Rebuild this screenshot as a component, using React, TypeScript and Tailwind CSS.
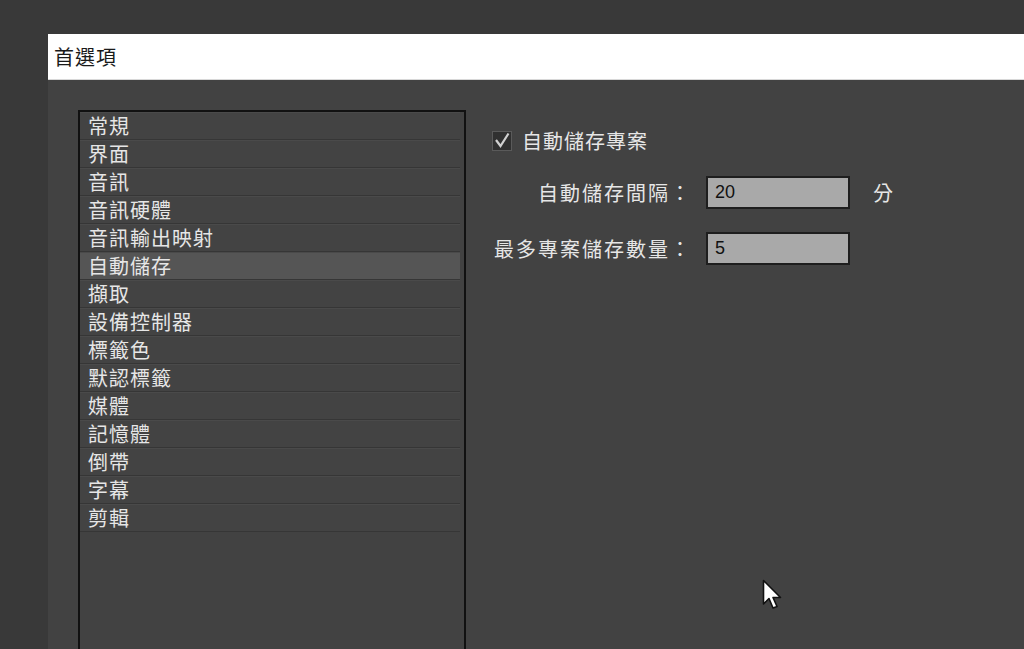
import { useState } from "react";

const items = [
  "常規",
  "界面",
  "音訊",
  "音訊硬體",
  "音訊輸出映射",
  "自動儲存",
  "擷取",
  "設備控制器",
  "標籤色",
  "默認標籤",
  "媒體",
  "記憶體",
  "倒帶",
  "字幕",
  "剪輯",
];

const font = {
  fontFamily: '"Noto Sans CJK TC", "Noto Sans", sans-serif',
};

export default function App() {
  const [selected, setSelected] = useState("自動儲存");
  const [autoSave, setAutoSave] = useState(true);
  const [interval, setIntervalValue] = useState("20");
  const [maxCount, setMaxCount] = useState("5");

  return (
    <div
      className="relative h-[649px] w-[1024px] overflow-hidden bg-[#393939] pl-[48px] pt-[34px]"
      style={font}
    >
      <div className="flex h-full flex-col bg-[#424242]">
        {/* title bar */}
        <div className="flex h-[46px] shrink-0 items-center border-b border-[#d8d8d8] bg-white pl-[6px]">
          <span className="text-[20px] leading-none tracking-[1px] text-[#1a1a1a]">首選項</span>
        </div>

        <div className="flex flex-1 pl-[30px] pt-[30px]">
          {/* category list */}
          <div className="h-[600px] w-[388px] shrink-0 border-2 border-[#111] bg-[#424242] pr-[4px]">
            {items.map((it) => (
              <div
                key={it}
                onClick={() => setSelected(it)}
                className={
                  "flex h-[28px] items-center border-b border-t border-b-[#363636] border-t-[#4a4a4a] pl-[8px] text-[20px] leading-none tracking-[1px] text-[#e6e6e6] " +
                  (selected === it ? "bg-[#555555]" : "bg-[#434343]")
                }
              >
                {it}
              </div>
            ))}
          </div>

          {/* settings */}
          <div className="flex flex-col pl-[26px] pt-[21px]">
            <label className="flex cursor-pointer items-center gap-[10px]">
              <span
                onClick={() => setAutoSave(!autoSave)}
                className="flex h-[20px] w-[20px] items-center justify-center border border-[#5a5a5a] bg-[#303030]"
              >
                {autoSave && (
                  <svg width="18" height="18" viewBox="0 0 18 18">
                    <path d="M3 8 L7.5 14 L15.5 1.5" fill="none" stroke="#d0d0d0" strokeWidth="2.2" />
                  </svg>
                )}
              </span>
              <span className="text-[20px] leading-none tracking-[1px] text-[#e6e6e6]">自動儲存專案</span>
            </label>

            <div className="mt-[25px] grid grid-cols-[200px_144px_auto] items-center gap-x-[14px] gap-y-[23px]">
              <span className="text-right text-[20px] leading-none tracking-[2px] text-[#e6e6e6]">自動儲存間隔：</span>
              <input
                value={interval}
                onChange={(e) => setIntervalValue(e.target.value)}
                className="h-[33px] w-[144px] border-2 border-[#1e1e1e] bg-[#a9a9a9] px-[7px] text-[18px] text-[#111] outline-none"
                style={{ fontFamily: '"Liberation Sans", Arial, sans-serif' }}
              />
              <span className="pl-[9px] text-[20px] leading-none text-[#e6e6e6]">分</span>

              <span className="text-right text-[20px] leading-none tracking-[2px] text-[#e6e6e6]">最多專案儲存數量：</span>
              <input
                value={maxCount}
                onChange={(e) => setMaxCount(e.target.value)}
                className="h-[33px] w-[144px] border-2 border-[#1e1e1e] bg-[#a9a9a9] px-[7px] text-[18px] text-[#111] outline-none"
                style={{ fontFamily: '"Liberation Sans", Arial, sans-serif' }}
              />
              <span />
            </div>
          </div>
        </div>
      </div>

      {/* mouse cursor */}
      <svg className="absolute left-[762px] top-[579px]" width="24" height="34" viewBox="0 0 24 34">
        <path
          d="M1.5 1.5 L1.5 25 L7 19.5 L11 29 L15 27.5 L11 18.5 L18.5 18.5 Z"
          fill="#ffffff"
          stroke="#111"
          strokeWidth="1.6"
          strokeLinejoin="round"
        />
      </svg>
    </div>
  );
}
